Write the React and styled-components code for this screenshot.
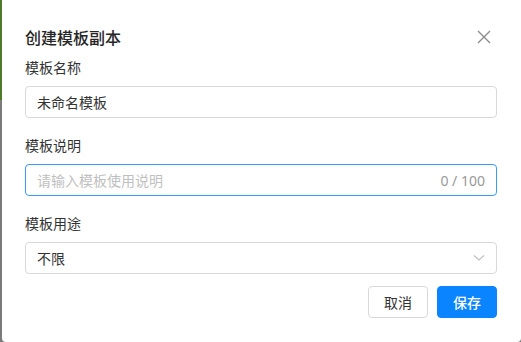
import React from "react";
import styled, { createGlobalStyle } from "styled-components";

const Global = createGlobalStyle`
  html, body { margin: 0; padding: 0; }
  body {
    width: 521px; height: 342px; overflow: hidden;
    font-family: "Noto Sans CJK SC", "Noto Sans", sans-serif;
  }
  * { box-sizing: border-box; }
`;

const Backdrop = styled.div`
  width: 521px;
  height: 342px;
  display: flex;
  background: linear-gradient(to bottom, #4f7a2a 0, #4f7a2a 100px, #7b7b7b 100px, #7b7b7b 100%);
  padding-left: 2px;
`;

const Modal = styled.div`
  flex: 1;
  background: #fff;
  border-radius: 0 0 4px 4px;
  padding: 25px 24px 0 23px;
  display: flex;
  flex-direction: column;
`;

const Header = styled.div`
  display: flex;
  align-items: center;
  justify-content: space-between;
  height: 24px;
  margin-bottom: 7px;
`;

const Title = styled.div`
  font-size: 16px;
  font-weight: 500;
  color: #262626;
  line-height: 24px;
`;

const Close = styled.button`
  border: none;
  background: none;
  padding: 0;
  width: 16px;
  height: 16px;
  margin-right: 5px;
  display: flex;
  align-items: center;
  justify-content: center;
  cursor: pointer;
`;

const Field = styled.div`
  display: flex;
  flex-direction: column;
  margin-bottom: ${(p) => p.$mb || 16}px;
`;

const Label = styled.div`
  font-size: 14px;
  line-height: 22px;
  color: #333;
  margin-bottom: 8px;
`;

const Box = styled.div`
  height: 32px;
  border: 1px solid ${(p) => (p.$focus ? "#3a9bff" : "#d9d9d9")};
  border-radius: 4px;
  display: flex;
  align-items: center;
  padding: 0 11px;
  font-size: 14px;
  color: ${(p) => (p.$placeholder ? "#bfbfbf" : "#333")};
`;

const BoxText = styled.span`
  flex: 1;
`;

const Count = styled.span`
  color: #999;
  font-size: 14px;
  font-family: "Noto Sans", sans-serif;
`;

const Footer = styled.div`
  display: flex;
  justify-content: flex-end;
  gap: 9px;
`;

const Button = styled.button`
  width: 60px;
  height: 32px;
  border-radius: 4px;
  font-family: "Noto Sans CJK SC", sans-serif;
  font-size: 14px;
  border: 1px solid ${(p) => (p.$primary ? "#0b84ff" : "#d9d9d9")};
  background: ${(p) => (p.$primary ? "#0b84ff" : "#fff")};
  color: ${(p) => (p.$primary ? "#fff" : "#333")};
  font-weight: ${(p) => (p.$primary ? 500 : 400)};
  padding: 0;
`;

export default function App() {
  return (
    <Backdrop>
      <Global />
      <Modal>
        <Header>
          <Title>创建模板副本</Title>
          <Close aria-label="关闭">
            <svg width="14" height="14" viewBox="0 0 14 14">
              <path d="M1 1L13 13M13 1L1 13" stroke="#8c8c8c" strokeWidth="1.4" fill="none" />
            </svg>
          </Close>
        </Header>
        <Field>
          <Label>模板名称</Label>
          <Box><BoxText>未命名模板</BoxText></Box>
        </Field>
        <Field>
          <Label>模板说明</Label>
          <Box $focus $placeholder>
            <BoxText>请输入模板使用说明</BoxText>
            <Count>0 / 100</Count>
          </Box>
        </Field>
        <Field $mb={12}>
          <Label>模板用途</Label>
          <Box>
            <BoxText>不限</BoxText>
            <svg width="12" height="8" viewBox="0 0 12 8">
              <path d="M1 1.5L6 6L11 1.5" stroke="#bfbfbf" strokeWidth="1.1" fill="none" />
            </svg>
          </Box>
        </Field>
        <Footer>
          <Button>取消</Button>
          <Button $primary>保存</Button>
        </Footer>
      </Modal>
    </Backdrop>
  );
}
